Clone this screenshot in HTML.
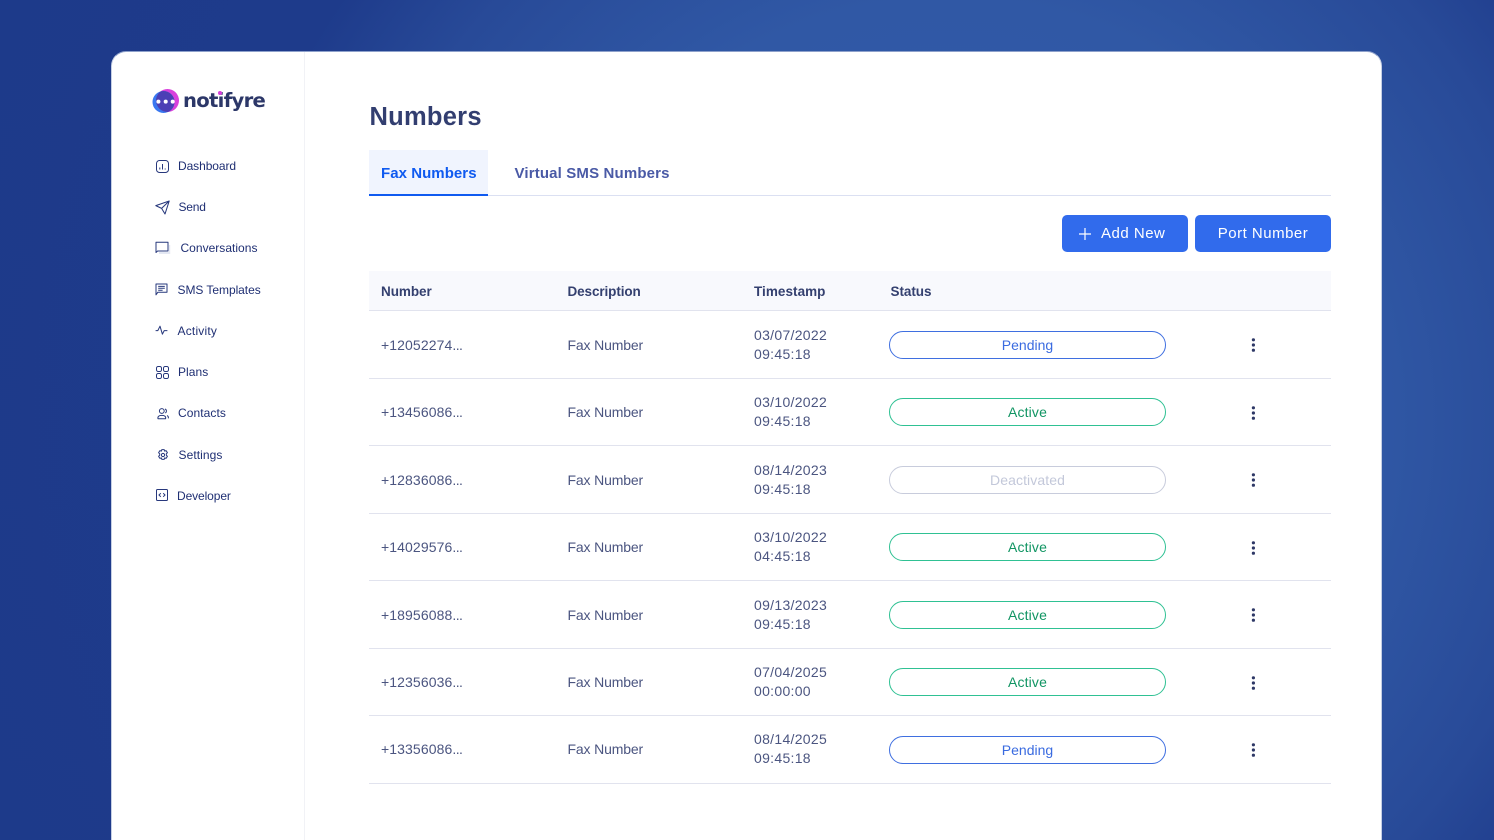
<!DOCTYPE html>
<html><head><meta charset="utf-8">
<style>
*{box-sizing:border-box}
html,body{margin:0;padding:0;width:1494px;height:840px;overflow:hidden}
#root{position:absolute;left:0;top:0;width:1494px;height:840px;overflow:hidden;font-family:"Liberation Sans",sans-serif;background:radial-gradient(circle at 950px 420px,#325dab 0,#3058a5 420px,#284a98 615px,#1e3b8b 740px,#1d3a8a 1100px)}
.t{position:absolute;white-space:nowrap;line-height:18px}
#card{position:absolute;left:111px;top:51px;width:1271px;height:810px;background:#fff;border-radius:15px;border:1px solid #c5cfe4;border-top-color:#8ea1cb}
.abs{position:absolute}
.nav{font-size:12px;color:#1f2f73}
.navi{position:absolute}
.th{font-size:13.5px;font-weight:bold;color:#34406f;letter-spacing:-.05px;top:283px}
.td{font-size:14px;color:#4b5580;letter-spacing:.3px}
.num{letter-spacing:.1px}
.num span{letter-spacing:-.55px}
.fx{letter-spacing:-.15px}
.line{position:absolute;left:369px;width:962px;height:1px;background:#e1e3ee}
.pill{position:absolute;left:889px;width:277px;height:28px;border-radius:14px;border:1px solid;background:#fff;text-align:center;font-size:14px;line-height:26px}
.pend{border-color:#3f6fe0;color:#3a6be0;letter-spacing:0}
.act{border-color:#2fc193;color:#119563;letter-spacing:.15px}
.dea{border-color:#c8ccdc;color:#c3c8da;letter-spacing:.1px}
.dots{position:absolute;left:1251px;width:5px;height:14px}
.btn{position:absolute;top:215px;height:37px;background:#316bec;border-radius:5px;color:#fff;font-size:15px;letter-spacing:.5px;line-height:37px}
</style></head>
<body>
<div id="root">
<div id="card"></div>
<div class="abs" style="left:304px;top:52px;width:1px;height:788px;background:#f1f2f6"></div>

<!-- logo -->
<svg class="abs" style="left:151px;top:88px" width="30" height="27" viewBox="0 0 30 27">
<defs><clipPath id="c"><circle cx="16.5" cy="12.5" r="11.5"/></clipPath></defs>
<circle cx="16.5" cy="12.5" r="11.5" fill="#d840dc"/>
<circle cx="12.5" cy="14" r="11" fill="#3a78f0"/>
<circle cx="12.5" cy="14" r="11" fill="#4c3fb5" clip-path="url(#c)"/>
<circle cx="7.4" cy="13.6" r="2" fill="#fff"/><circle cx="14.7" cy="13.6" r="2" fill="#fff"/><circle cx="21.7" cy="13.6" r="2" fill="#fff"/>
</svg>
<div class="t" style="left:183px;top:88px;font-family:'DejaVu Sans',sans-serif;font-size:19.6px;line-height:26px;font-weight:bold;color:#2c3768;letter-spacing:-.7px">notifyre</div>
<div class="abs" style="left:218px;top:91px;width:4px;height:4px;border-radius:50%;background:#d840dc"></div>

<!-- nav icons -->
<svg class="navi" style="left:156px;top:160px" width="13" height="13" viewBox="0 0 13 13" fill="none" stroke="#27387c" stroke-width="1"><rect x=".5" y=".5" width="12" height="12" rx="3"/><path d="M3.8 7.5v2M6.5 4v5.5M9.2 8.5v1"/></svg>
<svg class="navi" style="left:155px;top:200px" width="15" height="15" viewBox="0 0 15 15" fill="none" stroke="#27387c" stroke-width="1.05" stroke-linejoin="round"><path d="M.8 5.6 14.2 1 10 14 6.6 8.4ZM6.6 8.4 14.2 1"/></svg>
<svg class="navi" style="left:155px;top:241px" width="16" height="14" viewBox="0 0 16 14" fill="none"><path d="M4 11h10.5v2H4z" fill="#e4e8f3"/><path d="M14 4h1.2v9H14z" fill="#e4e8f3"/><path d="M1 11.5V1.2h12V10H2.6Z" stroke="#27387c" stroke-width="1" stroke-linejoin="round"/></svg>
<svg class="navi" style="left:155px;top:283px" width="13" height="13" viewBox="0 0 13 13" fill="none" stroke="#27387c" stroke-width="1"><path d="M1 11.8V1h11v8.3H2.8Z" stroke-linejoin="round"/><path d="M3.2 3.4h6.6M3.2 5.3h6.6M3.2 7.2h4.4"/></svg>
<svg class="navi" style="left:155px;top:325px" width="13" height="11" viewBox="0 0 13 11" fill="none" stroke="#27387c" stroke-width="1" stroke-linejoin="round"><path d="M.6 5.6h2.2L5 1.2l2.4 8 1.8-3.6h3.2"/></svg>
<svg class="navi" style="left:156px;top:366px" width="13" height="13" viewBox="0 0 13 13" fill="none" stroke="#27387c" stroke-width="1"><rect x=".5" y=".5" width="5" height="5" rx="1.6"/><rect x="7.5" y=".5" width="5" height="5" rx="1.6"/><rect x=".5" y="7.5" width="5" height="5" rx="1.6"/><rect x="7.5" y="7.5" width="5" height="5" rx="1.6"/></svg>
<svg class="navi" style="left:157px;top:408px" width="12" height="12" viewBox="0 0 12 12" fill="none" stroke="#27387c" stroke-width="1"><circle cx="4.8" cy="3" r="2.4"/><path d="M1 10.8c-.5-2.2.8-3.4 3.8-3.4s4.3 1.2 3.8 3.4Z" stroke-linejoin="round"/><path d="M8 1a2.2 2.2 0 0 1 .3 4M10 7.6c1.2.5 1.6 1.5 1.3 2.8"/></svg>
<svg class="navi" style="left:157px;top:449px" width="12" height="12" viewBox="0 0 12 12" fill="none" stroke="#27387c" stroke-width="1" stroke-linejoin="round"><path d="M4.8.6h2.4l.4 1.5 1.5-.5 1.3 2.1-1.1 1.2v1.2l1.1 1.2-1.3 2.1-1.5-.5-.4 1.5H4.8l-.4-1.5-1.5.5-1.3-2.1 1.1-1.2V4.9L1.6 3.7l1.3-2.1 1.5.5Z"/><circle cx="6" cy="6" r="1.6"/></svg>
<svg class="navi" style="left:156px;top:489px" width="12" height="12" viewBox="0 0 12 12" fill="none" stroke="#27387c" stroke-width="1"><rect x=".5" y=".5" width="11" height="11" rx="1"/><path d="M4.8 4.2 3 6l1.8 1.8M7.2 4.2 9 6 7.2 7.8"/></svg>

<!-- nav text -->
<div class="t nav" style="left:178px;top:157px;letter-spacing:-.08px">Dashboard</div>
<div class="t nav" style="left:178.5px;top:198px;letter-spacing:-.2px">Send</div>
<div class="t nav" style="left:180.5px;top:239px;letter-spacing:.02px">Conversations</div>
<div class="t nav" style="left:177.5px;top:281px;letter-spacing:-.05px">SMS Templates</div>
<div class="t nav" style="left:177.5px;top:322px;letter-spacing:.2px">Activity</div>
<div class="t nav" style="left:178px;top:363px;letter-spacing:.05px">Plans</div>
<div class="t nav" style="left:178px;top:404px;letter-spacing:.07px">Contacts</div>
<div class="t nav" style="left:178.5px;top:446px;letter-spacing:.07px">Settings</div>
<div class="t nav" style="left:177px;top:487px;letter-spacing:-.1px">Developer</div>

<!-- heading -->
<div class="t" style="left:369.5px;top:102px;font-size:25.5px;line-height:30px;font-weight:bold;color:#323e70;letter-spacing:.25px">Numbers</div>

<!-- tabs -->
<div class="abs" style="left:369px;top:150px;width:119px;height:45px;background:#f0f4fe"></div>
<div class="abs" style="left:369px;top:195px;width:962px;height:1px;background:#dbe0f2"></div>
<div class="abs" style="left:369px;top:194px;width:119px;height:2px;background:#0f5af0"></div>
<div class="t" style="left:381px;top:165px;font-size:15px;font-weight:bold;color:#0f5af0;letter-spacing:.05px">Fax Numbers</div>
<div class="t" style="left:514.5px;top:165px;font-size:15px;font-weight:bold;color:#4a5aa6;letter-spacing:.15px">Virtual SMS Numbers</div>

<!-- buttons -->
<div class="btn" style="left:1062px;width:126px;padding-left:39px">Add New</div>
<svg class="abs" style="left:1079px;top:228px" width="12" height="12" viewBox="0 0 12 12" stroke="#fff" stroke-width="1.2"><path d="M6 0v12M0 6h12"/></svg>
<div class="btn" style="left:1195px;width:136px;text-align:center">Port Number</div>

<!-- table header -->
<div class="abs" style="left:369px;top:271px;width:962px;height:40px;background:#f8f9fd"></div>
<div class="line" style="top:310px"></div>
<div class="t th" style="left:381px">Number</div>
<div class="t th" style="left:567.5px;letter-spacing:-.1px">Description</div>
<div class="t th" style="left:754px;letter-spacing:.05px">Timestamp</div>
<div class="t th" style="left:890.5px">Status</div>

<svg width="0" height="0" style="position:absolute"><defs><g id="d" fill="#2e3866"><circle cx="2.4" cy="1.8" r="1.6"/><circle cx="2.4" cy="7" r="1.6"/><circle cx="2.4" cy="12.2" r="1.6"/></g></defs></svg>

<!-- rows -->
<div class="t td num" style="left:381px;top:336px">+12052274<span>...</span></div><div class="t td fx" style="left:567.5px;top:336px">Fax Number</div>
<div class="t td" style="left:754px;top:326px">03/07/2022</div><div class="t td" style="left:754px;top:345px">09:45:18</div>
<div class="pill pend" style="top:331px">Pending</div>
<svg class="dots" style="top:338px" viewBox="0 0 5 14"><use href="#d"/></svg>
<div class="line" style="top:378px"></div>

<div class="t td num" style="left:381px;top:403px">+13456086<span>...</span></div><div class="t td fx" style="left:567.5px;top:403px">Fax Number</div>
<div class="t td" style="left:754px;top:393px">03/10/2022</div><div class="t td" style="left:754px;top:412px">09:45:18</div>
<div class="pill act" style="top:398px">Active</div>
<svg class="dots" style="top:405.5px" viewBox="0 0 5 14"><use href="#d"/></svg>
<div class="line" style="top:445px"></div>

<div class="t td num" style="left:381px;top:471px">+12836086<span>...</span></div><div class="t td fx" style="left:567.5px;top:471px">Fax Number</div>
<div class="t td" style="left:754px;top:461px">08/14/2023</div><div class="t td" style="left:754px;top:480px">09:45:18</div>
<div class="pill dea" style="top:466px">Deactivated</div>
<svg class="dots" style="top:473px" viewBox="0 0 5 14"><use href="#d"/></svg>
<div class="line" style="top:513px"></div>

<div class="t td num" style="left:381px;top:538px">+14029576<span>...</span></div><div class="t td fx" style="left:567.5px;top:538px">Fax Number</div>
<div class="t td" style="left:754px;top:528px">03/10/2022</div><div class="t td" style="left:754px;top:547px">04:45:18</div>
<div class="pill act" style="top:533px">Active</div>
<svg class="dots" style="top:540.5px" viewBox="0 0 5 14"><use href="#d"/></svg>
<div class="line" style="top:580px"></div>

<div class="t td num" style="left:381px;top:606px">+18956088<span>...</span></div><div class="t td fx" style="left:567.5px;top:606px">Fax Number</div>
<div class="t td" style="left:754px;top:596px">09/13/2023</div><div class="t td" style="left:754px;top:615px">09:45:18</div>
<div class="pill act" style="top:601px">Active</div>
<svg class="dots" style="top:608px" viewBox="0 0 5 14"><use href="#d"/></svg>
<div class="line" style="top:648px"></div>

<div class="t td num" style="left:381px;top:673px">+12356036<span>...</span></div><div class="t td fx" style="left:567.5px;top:673px">Fax Number</div>
<div class="t td" style="left:754px;top:663px">07/04/2025</div><div class="t td" style="left:754px;top:682px">00:00:00</div>
<div class="pill act" style="top:668px">Active</div>
<svg class="dots" style="top:675.5px" viewBox="0 0 5 14"><use href="#d"/></svg>
<div class="line" style="top:715px"></div>

<div class="t td num" style="left:381px;top:740px">+13356086<span>...</span></div><div class="t td fx" style="left:567.5px;top:740px">Fax Number</div>
<div class="t td" style="left:754px;top:730px">08/14/2025</div><div class="t td" style="left:754px;top:749px">09:45:18</div>
<div class="pill pend" style="top:736px">Pending</div>
<svg class="dots" style="top:743px" viewBox="0 0 5 14"><use href="#d"/></svg>
<div class="line" style="top:783px"></div>
</div>
</body></html>
